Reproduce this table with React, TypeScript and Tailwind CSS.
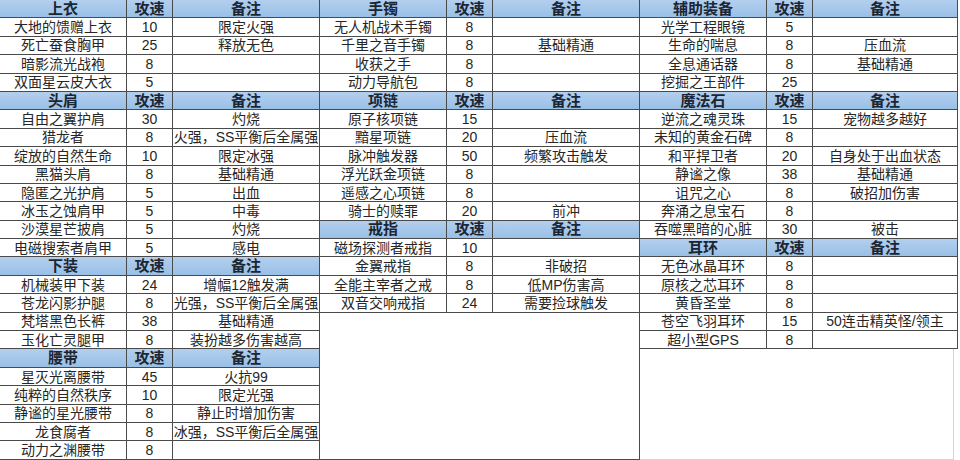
type Item = [string, string, string]

interface Section {
  title: string
  items: Item[]
}

const LEFT: Section[] = [
  {
    title: '上衣',
    items: [
      ['大地的馈赠上衣', '10', '限定火强'],
      ['死亡蚕食胸甲', '25', '释放无色'],
      ['暗影流光战袍', '8', ''],
      ['双面星云皮大衣', '5', ''],
    ],
  },
  {
    title: '头肩',
    items: [
      ['自由之翼护肩', '30', '灼烧'],
      ['猎龙者', '8', '火强，SS平衡后全属强'],
      ['绽放的自然生命', '10', '限定冰强'],
      ['黑猫头肩', '8', '基础精通'],
      ['隐匿之光护肩', '5', '出血'],
      ['冰玉之蚀肩甲', '5', '中毒'],
      ['沙漠星芒披肩', '5', '灼烧'],
      ['电磁搜索者肩甲', '5', '感电'],
    ],
  },
  {
    title: '下装',
    items: [
      ['机械装甲下装', '24', '增幅12触发满'],
      ['苍龙闪影护腿', '8', '光强，SS平衡后全属强'],
      ['梵塔黑色长裤', '38', '基础精通'],
      ['玉化亡灵腿甲', '8', '装扮越多伤害越高'],
    ],
  },
  {
    title: '腰带',
    items: [
      ['星灭光离腰带', '45', '火抗99'],
      ['纯粹的自然秩序', '10', '限定光强'],
      ['静谧的星光腰带', '8', '静止时增加伤害'],
      ['龙食腐者', '8', '冰强，SS平衡后全属强'],
      ['动力之渊腰带', '8', ''],
    ],
  },
]

const MIDDLE: Section[] = [
  {
    title: '手镯',
    items: [
      ['无人机战术手镯', '8', ''],
      ['千里之音手镯', '8', '基础精通'],
      ['收获之手', '8', ''],
      ['动力导航包', '8', ''],
    ],
  },
  {
    title: '项链',
    items: [
      ['原子核项链', '15', ''],
      ['黯星项链', '20', '压血流'],
      ['脉冲触发器', '50', '频繁攻击触发'],
      ['浮光跃金项链', '8', ''],
      ['遥感之心项链', '8', ''],
      ['骑士的赎罪', '20', '前冲'],
    ],
  },
  {
    title: '戒指',
    items: [
      ['磁场探测者戒指', '10', ''],
      ['金翼戒指', '8', '非破招'],
      ['全能主宰者之戒', '8', '低MP伤害高'],
      ['双音交响戒指', '24', '需要捡球触发'],
    ],
  },
]

const RIGHT: Section[] = [
  {
    title: '辅助装备',
    items: [
      ['光学工程眼镜', '5', ''],
      ['生命的喘息', '8', '压血流'],
      ['全息通话器', '8', '基础精通'],
      ['挖掘之王部件', '25', ''],
    ],
  },
  {
    title: '魔法石',
    items: [
      ['逆流之魂灵珠', '15', '宠物越多越好'],
      ['未知的黄金石碑', '8', ''],
      ['和平捍卫者', '20', '自身处于出血状态'],
      ['静谧之像', '38', '基础精通'],
      ['诅咒之心', '8', '破招加伤害'],
      ['奔涌之息宝石', '8', ''],
      ['吞噬黑暗的心脏', '30', '被击'],
    ],
  },
  {
    title: '耳环',
    items: [
      ['无色冰晶耳环', '8', ''],
      ['原核之芯耳环', '8', ''],
      ['黄昏圣堂', '8', ''],
      ['苍空飞羽耳环', '15', '50连击精英怪/领主'],
      ['超小型GPS', '8', ''],
    ],
  },
]

const cell = 'flex items-center justify-center overflow-hidden whitespace-nowrap border-r border-b border-[#4a4a4a]'

function HeaderRow({ title }: { title: string }) {
  return (
    <div className="flex h-[18.4px] shrink-0 bg-gradient-to-b from-[#b3cfee] to-[#98bfe6] font-bold text-[15px] text-[#1c2633]">
      <div className={`${cell} w-[127px]`}>{title}</div>
      <div className={`${cell} w-[46px]`}>攻速</div>
      <div className={`${cell} flex-1`}>备注</div>
    </div>
  )
}

function ItemRow({ item }: { item: Item }) {
  const [name, speed, note] = item
  return (
    <div className="flex h-[18.4px] shrink-0 bg-white text-[14px] text-[#262626]">
      <div className={`${cell} w-[127px]`}>{name}</div>
      <div className={`${cell} w-[46px]`}>{speed}</div>
      <div className={`${cell} flex-1`}>{note}</div>
    </div>
  )
}

function Group({ sections, width, tail }: { sections: Section[]; width: string; tail?: string }) {
  return (
    <div className={`flex flex-col ${width}`}>
      {sections.map((s) => (
        <div key={s.title} className="flex flex-col">
          <HeaderRow title={s.title} />
          {s.items.map((it) => (
            <ItemRow key={it[0]} item={it} />
          ))}
        </div>
      ))}
      {tail && <div className={`flex-1 ${tail}`} />}
    </div>
  )
}

export default function App() {
  return (
    <div
      className="flex h-[460px] w-[960px] overflow-hidden bg-white leading-[18px]"
      style={{ fontFamily: '"Liberation Sans", "Noto Sans CJK SC", sans-serif' }}
    >
      <Group sections={LEFT} width="w-[320px]" />
      <Group sections={MIDDLE} width="w-[320px]" tail="border-r border-b border-[#4a4a4a]" />
      <Group sections={RIGHT} width="w-[318px]" tail="mr-[4px] border-r border-b border-[#d4d4d4]" />
    </div>
  )
}
